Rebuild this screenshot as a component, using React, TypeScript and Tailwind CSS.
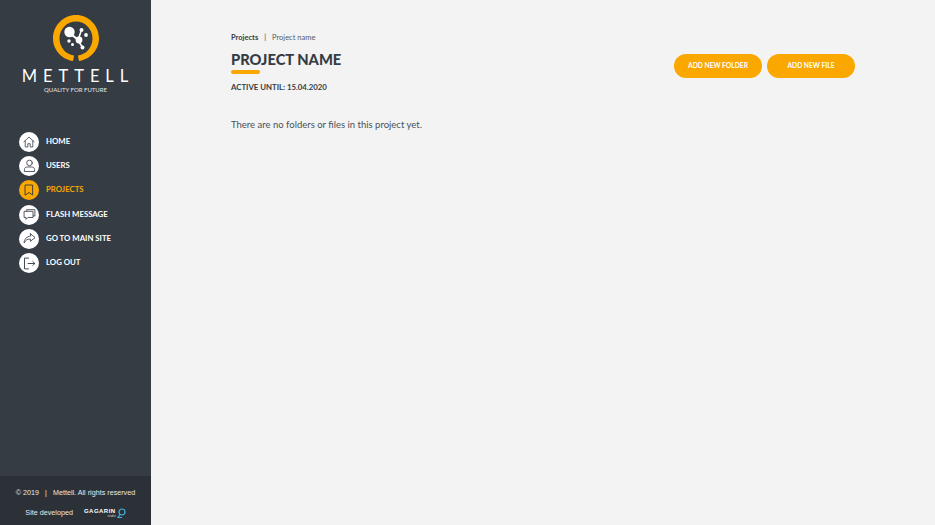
import type { ReactNode } from 'react';

const ic = { fill: 'none', stroke: 'currentColor', strokeWidth: 0.9, strokeLinecap: 'round', strokeLinejoin: 'round' } as const;

const navItems: { label: string; active?: boolean; icon: ReactNode }[] = [
  {
    label: 'HOME',
    icon: (
      <svg width="12" height="12" viewBox="0 0 14 14" {...ic}>
        <path d="M1 6.800 7 1.200l6 5.600M2.600 5.600v7.200h3V9h2.800v3.800h3V5.600" />
      </svg>
    ),
  },
  {
    label: 'USERS',
    icon: (
      <svg width="13" height="13" viewBox="0 0 14 14" {...ic}>
        <circle cx="7" cy="4.200" r="3" />
        <path d="M1.500 13v-1.600C1.500 9.600 3 8.600 4.600 8.600h4.800c1.600 0 3.100 1 3.100 2.800V13z" />
      </svg>
    ),
  },
  {
    label: 'PROJECTS',
    active: true,
    icon: (
      <svg width="12" height="12" viewBox="0 0 14 14" {...ic} strokeWidth={1.100}>
        <path d="M2.800 1.200h8.400v11.600L7 10l-4.200 2.800z" />
      </svg>
    ),
  },
  {
    label: 'FLASH MESSAGE',
    icon: (
      <svg width="13" height="13" viewBox="0 0 14 14" {...ic}>
        <path d="M4 3.400V1.800h8.800v6.800h-1.800" />
        <path d="M1.600 3.600h9.200v6.600H5.200l-2 2v-2H1.600z" />
      </svg>
    ),
  },
  {
    label: 'GO TO MAIN SITE',
    icon: (
      <svg width="13" height="13" viewBox="0 0 14 14" {...ic}>
        <path d="M8 1.800 13 6 8 10V7.600C5 7.400 2.800 8.600 1.200 11.800 1.400 7.800 3.800 4.800 8 4.400z" />
      </svg>
    ),
  },
  {
    label: 'LOG OUT',
    icon: (
      <svg width="13" height="13" viewBox="0 0 14 14" {...ic} strokeWidth={1}>
        <path d="M6 1.200H1.600v11.600H6M5.500 7h7M10.600 5 12.800 7l-2.200 2" />
      </svg>
    ),
  },
];

function Logo() {
  return (
    <div className="flex flex-col items-center">
      <svg width="48" height="48" viewBox="0 0 48 48">
        <path d="M21 47C10 45.500 1 36 1 24.500 1 11.500 11.500 1 24 1s23 10.500 23 23.500C47 36 38 45.500 27 47c-.8-3-.8-4-1-5.500 8.500-1 14.500-8.500 14.500-17C40.500 15 33 7.500 24 7.500S7.500 15 7.500 24.500c0 8.500 6 16 14.500 17-.2 1.500-.2 2.500-1 5.500z" fill="#faa700" />
        <g fill="#ffffff">
          <circle cx="17.500" cy="18" r="5.200" />
          <circle cx="27" cy="26" r="3.400" />
          <circle cx="29.500" cy="16" r="2" />
          <circle cx="34" cy="21" r="1.900" />
          <circle cx="17" cy="27" r="1.700" />
          <circle cx="20.500" cy="30.500" r="1.500" />
          <circle cx="30.500" cy="33.500" r="2" />
          <path d="M19 19l8 6-1.200 1.800-8-6zM28.800 15.800l1.300.7-3 9-1.500-.7zM27.200 27l4.200 6-1.300.9-4.100-6z" />
        </g>
      </svg>
      <div className="mt-[5px] pl-[5px] text-[16.500px] leading-[18px] font-normal tracking-[0.36em] text-white">METTELL</div>
      <div className="text-[6px] leading-[10px] text-[#e4e5e6]">QUALITY FOR FUTURE</div>
    </div>
  );
}

export default function App() {
  return (
    <div className="flex h-[525px] w-[935px] overflow-hidden bg-[#f3f3f3] font-['Lato',sans-serif]">
      <aside className="flex h-full w-[151px] shrink-0 flex-col bg-[#363c44]">
        <div className="pt-[14px]">
          <Logo />
        </div>
        <nav className="mt-[36.500px] flex flex-col gap-[4px] pl-[19px]">
          {navItems.map((item) => (
            <div key={item.label} className="flex h-[20.300px] items-center gap-[7px]">
              <span
                className={
                  item.active
                    ? 'flex size-[20px] items-center justify-center rounded-full bg-[#faa700] text-[#363c44]'
                    : 'flex size-[20px] items-center justify-center rounded-full bg-white text-[#363c44]'
                }
              >
                {item.icon}
              </span>
              <span className={item.active ? 'text-[7.800px] font-bold text-[#faa700]' : 'text-[7.800px] font-bold text-white'}>{item.label}</span>
            </div>
          ))}
        </nav>
        <footer className="mt-auto flex h-[49px] flex-col items-center bg-[#2c3137] font-['Liberation_Sans',sans-serif] text-[7.200px] text-[#e8e8e8]">
          <div className="mt-[12px] leading-[10px] whitespace-pre">© 2019   |   Mettell. All rights reserved</div>
          <div className="mt-[10px] flex items-center">
            <span className="leading-[10px]">Site developed</span>
            <span className="ml-[11px] flex items-center">
              <span className="flex flex-col items-end">
                <span className="text-[6px] leading-[6px] font-bold tracking-[0.08em] text-white">GAGARIN</span>
                <span className="text-[3px] leading-[4px] text-[#cfd2d5]">studio</span>
              </span>
              <svg className="ml-[1px]" width="9" height="10" viewBox="0 0 9 10" fill="none" stroke="#3fb4e0" strokeWidth="1.200">
                <circle cx="5" cy="4" r="3" />
                <path d="M3 6.500 1 9.500h4" />
              </svg>
            </span>
          </div>
        </footer>
      </aside>
      <main className="flex-1 pt-[33px] pr-[80px] pl-[80px] text-[#363c44]">
        <div className="flex items-start justify-between">
          <div>
            <div className="flex items-center text-[7.500px] leading-[10px]">
              <span className="font-bold">Projects</span>
              <span className="mx-[6px]">|</span>
              <span className="text-[#555b62]">Project name</span>
            </div>
            <h1 className="mt-[6px] text-[14.700px] leading-[20px] font-black">PROJECT NAME</h1>
            <div className="mt-[1px] h-[4px] w-[29px] rounded-full bg-[#faa700]" />
            <div className="mt-[8px] text-[7.800px] leading-[10px] font-bold">ACTIVE UNTIL: 15.04.2020</div>
          </div>
          <div className="mt-[20.500px] flex gap-[5px]">
            <button className="h-[24px] w-[88px] rounded-full bg-[#faa700] text-[6.700px] font-bold text-white">ADD NEW FOLDER</button>
            <button className="h-[24px] w-[88px] rounded-full bg-[#faa700] text-[6.700px] font-bold text-white">ADD NEW FILE</button>
          </div>
        </div>
        <p className="mt-[26px] text-[9.500px] leading-[14px] text-[#4a5057]">There are no folders or files in this project yet.</p>
      </main>
    </div>
  );
}
